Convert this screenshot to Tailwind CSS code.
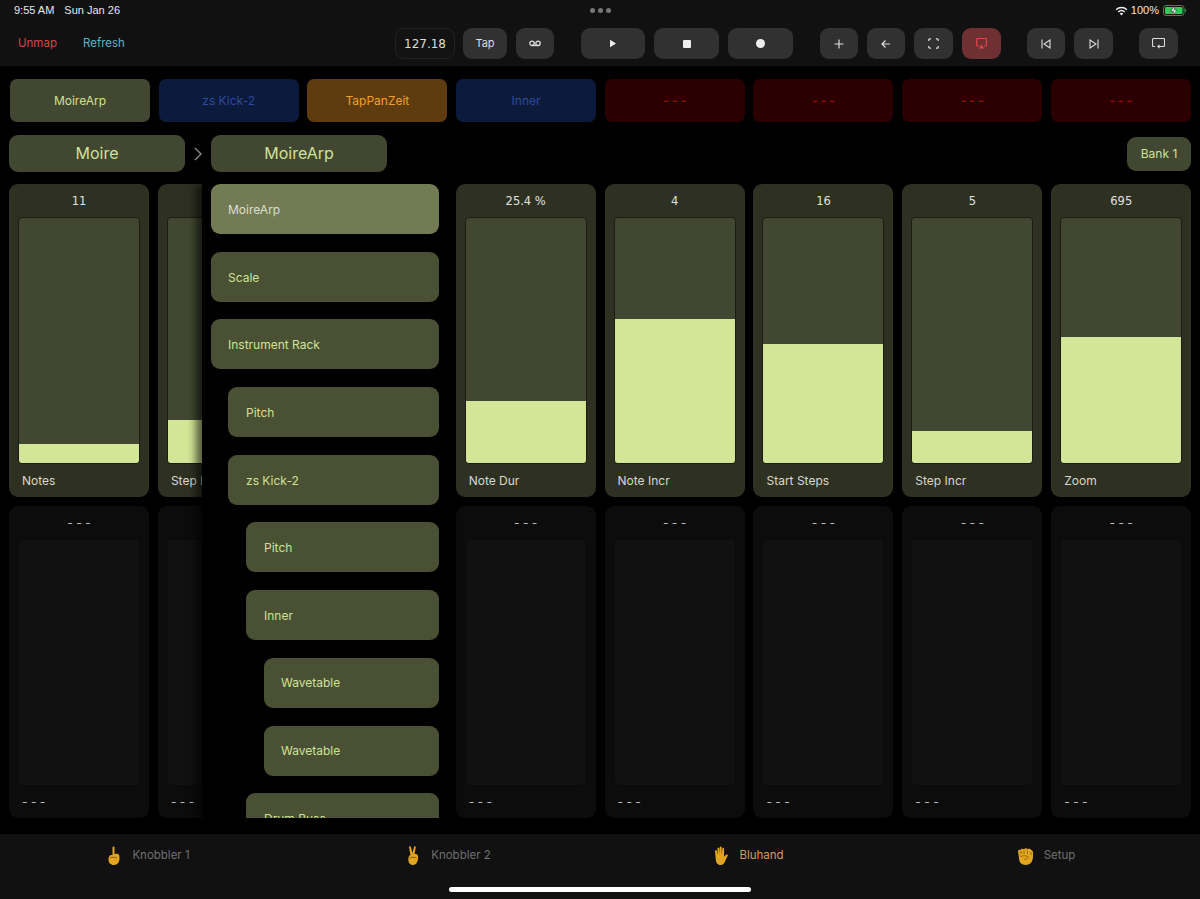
<!DOCTYPE html>
<html lang="en">
<head>
<meta charset="UTF-8">
<title>Knobbler</title>
<script src="https://cdn.jsdelivr.net/npm/@tailwindcss/browser@4"></script>
</head>
<body class="bg-black w-[1200px] h-[899px] overflow-hidden font-['Inter',sans-serif] text-[12px]">
<div class="relative flex flex-col h-[899px]">

  <!-- status bar + toolbar -->
  <div class="bg-[#111111] h-[66px] shrink-0">
    <div class="relative flex items-center justify-between h-[21px] pl-[14px] pr-[13px] text-[#e8e8e8] text-[11px] font-['Liberation_Sans',sans-serif]">
      <div class="flex gap-[10px]"><span>9:55 AM</span><span>Sun Jan 26</span></div>
      <div class="absolute left-[590px] top-[8px] flex gap-[3px]">
        <div class="w-[5px] h-[5px] rounded-full bg-[#777]"></div><div class="w-[5px] h-[5px] rounded-full bg-[#777]"></div><div class="w-[5px] h-[5px] rounded-full bg-[#777]"></div>
      </div>
      <div class="flex items-center gap-[3px]">
        <svg width="13" height="10" viewBox="0 0 13 10"><path d="M.6 3.2a8.4 8.4 0 0 1 11.8 0l-1 1.1a7 7 0 0 0-9.8 0z M2.7 5.4a5.4 5.4 0 0 1 7.6 0l-1 1.1a4 4 0 0 0-5.6 0z M4.7 7.5a2.6 2.6 0 0 1 3.6 0l-1.8 2z" fill="#eee"/></svg>
        <span>100%</span>
        <svg class="ml-[1px]" width="24" height="11" viewBox="0 0 24 11"><rect x=".5" y=".5" width="20.5" height="10" rx="2.5" fill="none" stroke="#3a8a4a"/><rect x="2" y="2" width="17.5" height="7" rx="1.2" fill="#34c759"/><path d="M21.8 3.6c1 .3 1.4 1 1.4 1.9s-.4 1.6-1.4 1.9z" fill="#3a8a4a"/><path d="M12 .8 7.6 6h3l-1 4.2L14.2 5h-3z" fill="#fff" stroke="#111" stroke-width=".5"/></svg>
      </div>
    </div>
    <div class="flex items-center h-[31px] mt-[7px] text-[11.5px]">
      <span class="ml-[18px] w-[39px] text-[#d8434f]">Unmap</span>
      <span class="ml-[26px] w-[42px] text-[#5fb3c4]">Refresh</span>
      <div class="ml-[270px] w-[60px] h-[31px] rounded-[9px] border border-[#222] bg-[#121212] text-[#ddd] text-[12px] font-['DejaVu_Sans',sans-serif] flex items-center justify-center">127.18</div>
      <div class="ml-[8px] w-[44px] h-[31px] rounded-[9px] bg-[#313131] text-[#ddd] text-[11px] flex items-center justify-center">Tap</div>
      <div class="ml-[9px] w-[38px] h-[31px] rounded-[9px] bg-[#313131] flex items-center justify-center">
        <svg width="12" height="7" viewBox="0 0 12 7" fill="none" stroke="#ddd" stroke-width="1.3"><circle cx="3" cy="3.3" r="2.2"/><circle cx="9" cy="3.3" r="2.2"/><path d="M3 5.5h6"/></svg>
      </div>
      <div class="ml-[27px] w-[64px] h-[31px] rounded-[9px] bg-[#313131] flex items-center justify-center">
        <svg width="8" height="9" viewBox="0 0 8 9"><path d="M1 .8 7 4.500 1 8.200z" fill="#eee"/></svg>
      </div>
      <div class="ml-[9px] w-[65px] h-[31px] rounded-[9px] bg-[#313131] flex items-center justify-center"><div class="w-[8px] h-[8px] rounded-[1px] bg-[#eee]"></div></div>
      <div class="ml-[9px] w-[65px] h-[31px] rounded-[9px] bg-[#313131] flex items-center justify-center"><div class="w-[9px] h-[9px] rounded-full bg-[#eee]"></div></div>
      <div class="ml-[27px] w-[38px] h-[31px] rounded-[9px] bg-[#313131] flex items-center justify-center">
        <svg width="10" height="10" viewBox="0 0 10 10" stroke="#ddd" stroke-width="1.2"><path d="M5 .5v9M.5 5h9"/></svg>
      </div>
      <div class="ml-[9px] w-[38px] h-[31px] rounded-[9px] bg-[#313131] flex items-center justify-center">
        <svg width="10" height="10" viewBox="0 0 10 10" fill="none" stroke="#ddd" stroke-width="1.2"><path d="M9 5H1M4.500 1.500 1 5l3.500 3.500"/></svg>
      </div>
      <div class="ml-[9px] w-[39px] h-[31px] rounded-[9px] bg-[#313131] flex items-center justify-center">
        <svg width="11" height="11" viewBox="0 0 11 11" fill="none" stroke="#ddd" stroke-width="1.2"><path d="M.7 3V1.800a1 1 0 0 1 1-1H3M8 .8h1.200a1 1 0 0 1 1 1V3M10.200 8v1.200a1 1 0 0 1-1 1H8M3 10.200H1.700a1 1 0 0 1-1-1V8"/></svg>
      </div>
      <div class="ml-[9px] w-[39px] h-[31px] rounded-[9px] bg-[#6e3032] flex items-center justify-center">
        <svg width="11" height="11" viewBox="0 0 11 11" fill="none" stroke="#e2474c" stroke-width="1.1"><path d="M3 8H1.600a1 1 0 0 1-1-1V1.500a1 1 0 0 1 1-1h7.800a1 1 0 0 1 1 1V7a1 1 0 0 1-1 1H8"/><path d="M5.500 6.500 8.200 10.400H2.800z" fill="#e2474c" stroke="none"/></svg>
      </div>
      <div class="ml-[26px] w-[38px] h-[31px] rounded-[9px] bg-[#313131] flex items-center justify-center">
        <svg width="10" height="10" viewBox="0 0 10 10" fill="none" stroke="#ddd" stroke-width="1.1"><path d="M1 .5v9M9 1 3 5l6 4z"/></svg>
      </div>
      <div class="ml-[9px] w-[39px] h-[31px] rounded-[9px] bg-[#313131] flex items-center justify-center">
        <svg width="10" height="10" viewBox="0 0 10 10" fill="none" stroke="#ddd" stroke-width="1.1"><path d="M9 .5v9M1 1l6 4-6 4z"/></svg>
      </div>
      <div class="ml-[26px] w-[39px] h-[31px] rounded-[9px] bg-[#313131] flex items-center justify-center">
        <svg width="13" height="11" viewBox="0 0 13 11" fill="none" stroke="#ddd" stroke-width="1.1"><path d="M3 8.500H1.500a1 1 0 0 1-1-1v-6a1 1 0 0 1 1-1h10a1 1 0 0 1 1 1v6a1 1 0 0 1-1 1H6"/><path d="M7.500 6.800 5.800 8.500l1.700 1.700"/></svg>
      </div>
    </div>
  </div>

  <!-- main -->
  <div class="relative flex-1 bg-black">
    <!-- track pads -->
    <div class="grid grid-cols-[repeat(8,140px)] gap-x-[8.7px] pl-[10px] pt-[13px] text-[12px]">
      <div class="h-[43px] rounded-[7px] bg-[#414731] text-[#cfe297] flex items-center justify-center">MoireArp</div>
      <div class="h-[43px] rounded-[7px] bg-[#0c1a3c] text-[#2c4a9c] flex items-center justify-center">zs Kick-2</div>
      <div class="h-[43px] rounded-[7px] bg-[#5f3c0f] text-[#f0a030] flex items-center justify-center">TapPanZeit</div>
      <div class="h-[43px] rounded-[7px] bg-[#0c1a3c] text-[#2c4a9c] flex items-center justify-center">Inner</div>
      <div class="h-[43px] rounded-[7px] bg-[#2b0000] text-[#b00000] font-semibold flex items-center justify-center">- - -</div>
      <div class="h-[43px] rounded-[7px] bg-[#2b0000] text-[#b00000] font-semibold flex items-center justify-center">- - -</div>
      <div class="h-[43px] rounded-[7px] bg-[#2b0000] text-[#b00000] font-semibold flex items-center justify-center">- - -</div>
      <div class="h-[43px] rounded-[7px] bg-[#2b0000] text-[#b00000] font-semibold flex items-center justify-center">- - -</div>
    </div>

    <!-- breadcrumb -->
    <div class="flex items-center h-[37px] mt-[13px] pl-[9px] pr-[9px]">
      <div class="w-[176px] h-[37px] pb-[2px] rounded-[9px] bg-[#414731] text-[#cfe297] text-[16px] flex items-center justify-center">Moire</div>
      <svg class="mx-[9px]" width="8" height="14" viewBox="0 0 8 14" fill="none" stroke="#8a8a8a" stroke-width="1.4"><path d="M1 1l6 6-6 6"/></svg>
      <div class="w-[176px] h-[37px] pb-[2px] rounded-[9px] bg-[#414731] text-[#cfe297] text-[16px] flex items-center justify-center">MoireArp</div>
      <div class="ml-auto w-[64px] h-[34px] rounded-[9px] bg-[#414731] text-[#cfe297] text-[12px] flex items-center justify-center">Bank 1</div>
    </div>

    <!-- strips: top row -->
    <div class="grid grid-cols-[repeat(8,140px)] gap-x-[8.9px] gap-y-[9px] pl-[9px] pt-[12px] text-[12px]">
      <div class="h-[313px] rounded-[9px] bg-[#2e3022] flex flex-col items-stretch px-[9px]">
        <div class="h-[33px] pt-[2px] text-[#e0e0e0] text-[11.5px] font-['DejaVu_Sans',sans-serif] flex items-center justify-center">11</div>
        <div class="relative h-[247px] rounded-[4px] bg-[#414731] border border-[#1b1d13] overflow-hidden"><div class="absolute inset-x-0 bottom-0 h-[19px] bg-[#d3e597]"></div></div>
        <div class="h-[33px] pl-[4px] text-[#d8d8d0] flex items-center">Notes</div>
      </div>
      <div class="h-[313px] rounded-[9px] bg-[#2e3022] flex flex-col items-stretch px-[9px]">
        <div class="h-[33px]"></div>
        <div class="relative h-[247px] rounded-[4px] bg-[#414731] border border-[#1b1d13] overflow-hidden"><div class="absolute inset-x-0 bottom-0 h-[43px] bg-[#d3e597]"></div></div>
        <div class="h-[33px] pl-[4px] text-[#d8d8d0] flex items-center">Step Length</div>
      </div>
      <div class="h-[313px]"></div>
      <div class="h-[313px] rounded-[9px] bg-[#2e3022] flex flex-col items-stretch px-[9px]">
        <div class="h-[33px] pt-[2px] text-[#e0e0e0] text-[11.5px] font-['DejaVu_Sans',sans-serif] flex items-center justify-center">25.4 %</div>
        <div class="relative h-[247px] rounded-[4px] bg-[#414731] border border-[#1b1d13] overflow-hidden"><div class="absolute inset-x-0 bottom-0 h-[62px] bg-[#d3e597]"></div></div>
        <div class="h-[33px] pl-[4px] text-[#d8d8d0] flex items-center">Note Dur</div>
      </div>
      <div class="h-[313px] rounded-[9px] bg-[#2e3022] flex flex-col items-stretch px-[9px]">
        <div class="h-[33px] pt-[2px] text-[#e0e0e0] text-[11.5px] font-['DejaVu_Sans',sans-serif] flex items-center justify-center">4</div>
        <div class="relative h-[247px] rounded-[4px] bg-[#414731] border border-[#1b1d13] overflow-hidden"><div class="absolute inset-x-0 bottom-0 h-[144px] bg-[#d3e597]"></div></div>
        <div class="h-[33px] pl-[4px] text-[#d8d8d0] flex items-center">Note Incr</div>
      </div>
      <div class="h-[313px] rounded-[9px] bg-[#2e3022] flex flex-col items-stretch px-[9px]">
        <div class="h-[33px] pt-[2px] text-[#e0e0e0] text-[11.5px] font-['DejaVu_Sans',sans-serif] flex items-center justify-center">16</div>
        <div class="relative h-[247px] rounded-[4px] bg-[#414731] border border-[#1b1d13] overflow-hidden"><div class="absolute inset-x-0 bottom-0 h-[119px] bg-[#d3e597]"></div></div>
        <div class="h-[33px] pl-[4px] text-[#d8d8d0] flex items-center">Start Steps</div>
      </div>
      <div class="h-[313px] rounded-[9px] bg-[#2e3022] flex flex-col items-stretch px-[9px]">
        <div class="h-[33px] pt-[2px] text-[#e0e0e0] text-[11.5px] font-['DejaVu_Sans',sans-serif] flex items-center justify-center">5</div>
        <div class="relative h-[247px] rounded-[4px] bg-[#414731] border border-[#1b1d13] overflow-hidden"><div class="absolute inset-x-0 bottom-0 h-[32px] bg-[#d3e597]"></div></div>
        <div class="h-[33px] pl-[4px] text-[#d8d8d0] flex items-center">Step Incr</div>
      </div>
      <div class="h-[313px] rounded-[9px] bg-[#2e3022] flex flex-col items-stretch px-[9px]">
        <div class="h-[33px] pt-[2px] text-[#e0e0e0] text-[11.5px] font-['DejaVu_Sans',sans-serif] flex items-center justify-center">695</div>
        <div class="relative h-[247px] rounded-[4px] bg-[#414731] border border-[#1b1d13] overflow-hidden"><div class="absolute inset-x-0 bottom-0 h-[126px] bg-[#d3e597]"></div></div>
        <div class="h-[33px] pl-[4px] text-[#d8d8d0] flex items-center">Zoom</div>
      </div>

      <!-- strips: empty row -->
      <div class="h-[312px] rounded-[9px] bg-[#0c0c0c] flex flex-col px-[9px]"><div class="h-[33px] text-[#bbb] flex items-center justify-center">- - -</div><div class="h-[247px] rounded-[4px] bg-[#111111] border border-[#0a0a0a]"></div><div class="h-[32px] pl-[4px] text-[#bbb] flex items-center">- - -</div></div>
      <div class="h-[312px] rounded-[9px] bg-[#0c0c0c] flex flex-col px-[9px]"><div class="h-[33px] text-[#bbb] flex items-center justify-center">- - -</div><div class="h-[247px] rounded-[4px] bg-[#111111] border border-[#0a0a0a]"></div><div class="h-[32px] pl-[4px] text-[#bbb] flex items-center">- - -</div></div>
      <div class="h-[312px]"></div>
      <div class="h-[312px] rounded-[9px] bg-[#0c0c0c] flex flex-col px-[9px]"><div class="h-[33px] text-[#bbb] flex items-center justify-center">- - -</div><div class="h-[247px] rounded-[4px] bg-[#111111] border border-[#0a0a0a]"></div><div class="h-[32px] pl-[4px] text-[#bbb] flex items-center">- - -</div></div>
      <div class="h-[312px] rounded-[9px] bg-[#0c0c0c] flex flex-col px-[9px]"><div class="h-[33px] text-[#bbb] flex items-center justify-center">- - -</div><div class="h-[247px] rounded-[4px] bg-[#111111] border border-[#0a0a0a]"></div><div class="h-[32px] pl-[4px] text-[#bbb] flex items-center">- - -</div></div>
      <div class="h-[312px] rounded-[9px] bg-[#0c0c0c] flex flex-col px-[9px]"><div class="h-[33px] text-[#bbb] flex items-center justify-center">- - -</div><div class="h-[247px] rounded-[4px] bg-[#111111] border border-[#0a0a0a]"></div><div class="h-[32px] pl-[4px] text-[#bbb] flex items-center">- - -</div></div>
      <div class="h-[312px] rounded-[9px] bg-[#0c0c0c] flex flex-col px-[9px]"><div class="h-[33px] text-[#bbb] flex items-center justify-center">- - -</div><div class="h-[247px] rounded-[4px] bg-[#111111] border border-[#0a0a0a]"></div><div class="h-[32px] pl-[4px] text-[#bbb] flex items-center">- - -</div></div>
      <div class="h-[312px] rounded-[9px] bg-[#0c0c0c] flex flex-col px-[9px]"><div class="h-[33px] text-[#bbb] flex items-center justify-center">- - -</div><div class="h-[247px] rounded-[4px] bg-[#111111] border border-[#0a0a0a]"></div><div class="h-[32px] pl-[4px] text-[#bbb] flex items-center">- - -</div></div>
    </div>

    <!-- device tree menu, lies over the strips -->
    <div class="absolute left-[202px] top-[118px] w-[252px] h-[634px] bg-black overflow-hidden shadow-[-6px_0_8px_rgba(0,0,0,0.6)] pl-[9px] flex flex-col gap-[17.7px] text-[12px] text-[#cfe297]">
      <div class="w-[228px] h-[50px] shrink-0 rounded-[9px] bg-[#727b54] text-[#dcdfcf] pt-[2px] pl-[17px] flex items-center">MoireArp</div>
      <div class="w-[228px] h-[50px] shrink-0 rounded-[9px] bg-[#4a5033] pt-[2px] pl-[17px] flex items-center">Scale</div>
      <div class="w-[228px] h-[50px] shrink-0 rounded-[9px] bg-[#4a5033] pt-[2px] pl-[17px] flex items-center">Instrument Rack</div>
      <div class="ml-[17px] w-[211px] h-[50px] shrink-0 rounded-[9px] bg-[#4a5033] pt-[2px] pl-[18px] flex items-center">Pitch</div>
      <div class="ml-[17px] w-[211px] h-[50px] shrink-0 rounded-[9px] bg-[#4a5033] pt-[2px] pl-[18px] flex items-center">zs Kick-2</div>
      <div class="ml-[35px] w-[193px] h-[50px] shrink-0 rounded-[9px] bg-[#4a5033] pt-[2px] pl-[18px] flex items-center">Pitch</div>
      <div class="ml-[35px] w-[193px] h-[50px] shrink-0 rounded-[9px] bg-[#4a5033] pt-[2px] pl-[18px] flex items-center">Inner</div>
      <div class="ml-[53px] w-[175px] h-[50px] shrink-0 rounded-[9px] bg-[#4a5033] pt-[1px] pl-[17px] flex items-center">Wavetable</div>
      <div class="ml-[53px] w-[175px] h-[50px] shrink-0 rounded-[9px] bg-[#4a5033] pt-[1px] pl-[17px] flex items-center">Wavetable</div>
      <div class="ml-[35px] w-[193px] h-[50px] shrink-0 rounded-[9px] bg-[#4a5033] pt-[2px] pl-[18px] flex items-center">Drum Buss</div>
    </div>
  </div>

  <!-- bottom tabs -->
  <div class="relative bg-[#111111] h-[65px] shrink-0">
    <div class="grid grid-cols-4 h-[44px] text-[11.5px] text-[#6f6f6f]">
      <div class="flex items-center justify-center gap-[10px] pr-[4px]">
        <svg width="16" height="20" viewBox="0 0 16 20"><path d="M6.500 1.500c0-1.400 2-1.400 2 0v6.600c1.800-.5 3.600-.2 4.200.4.700.7.800 2 .8 4 0 3.500-1.800 6.500-5.500 6.500s-5.500-2.400-5.500-5.500c0-2 .6-3.500 1.500-4 .6-.4 1.500-.5 2.500-.4z" fill="#e2a520"/><path d="M4 12c2-1 5-1 7 0" stroke="#8a5a12" fill="none"/></svg>
        <span>Knobbler 1</span>
      </div>
      <div class="flex items-center justify-center gap-[10px] pr-[4px]">
        <svg width="16" height="20" viewBox="0 0 16 20"><path d="M4 1.200c-.3-1 1.500-1.400 1.800-.4L7.500 7 9 .9c.3-1 2-.6 1.800.4L9.500 8c1.600 0 3 .5 3.200 1.200.5 1 .5 2.300.3 3.800-.4 3.200-2 6-5 6s-4.700-2.500-4.700-5.500c0-1.500.4-3 1.200-4 .3-.3.6-.5 1-.6z" fill="#e2a520"/><path d="M4.500 12c2-1 5-1 7 0" stroke="#8a5a12" fill="none"/></svg>
        <span>Knobbler 2</span>
      </div>
      <div class="flex items-center justify-center gap-[10px] pr-[4px] text-[#d49a5c]">
        <svg width="17" height="20" viewBox="0 0 17 20"><path d="M3 5c0-1.200 1.600-1.200 1.800 0l.7 4V2.500c0-1.300 1.700-1.300 1.800 0V9L7.800 1.500c0-1.300 1.800-1.300 1.900 0V9l.7-6.500c.1-1.200 1.800-1 1.700.2V11c.5-1 1.500-2.600 2.900-2.600.8 0 1 .7.700 1.300-.9 1.300-1.500 3-2.200 4.800-.9 2.700-2.500 4.500-5 4.500-3 0-4.500-2.500-4.700-5.500z" fill="#e2a520"/></svg>
        <span>Bluhand</span>
      </div>
      <div class="flex items-center justify-center gap-[10px] pr-[8px]">
        <svg width="17" height="19" viewBox="0 0 17 19"><path d="M1 4.500C1 3 2.500 2.500 3.500 3 4 1.500 6 1.200 7 2.300 8 1 10 1 10.800 2.300c1-.8 3-.5 3.400 1 .5 0 1.800.5 1.800 2 0 2.500.2 5-.5 7.500-.7 3.200-3.200 5.200-6.500 5.200C4 18 2 15 2 11z" fill="#e2a520"/><path d="M4 4v3M7 3.500V7M10.500 3.500V7M14 5v3M3 9.500c3-1 6-1 8 0 0 2-2 3-4 3" stroke="#8a5a12" stroke-width=".8" fill="none"/></svg>
        <span>Setup</span>
      </div>
    </div>
    <div class="absolute left-[449px] top-[53px] w-[302px] h-[5px] rounded-full bg-white"></div>
  </div>
</div>
</body>
</html>
